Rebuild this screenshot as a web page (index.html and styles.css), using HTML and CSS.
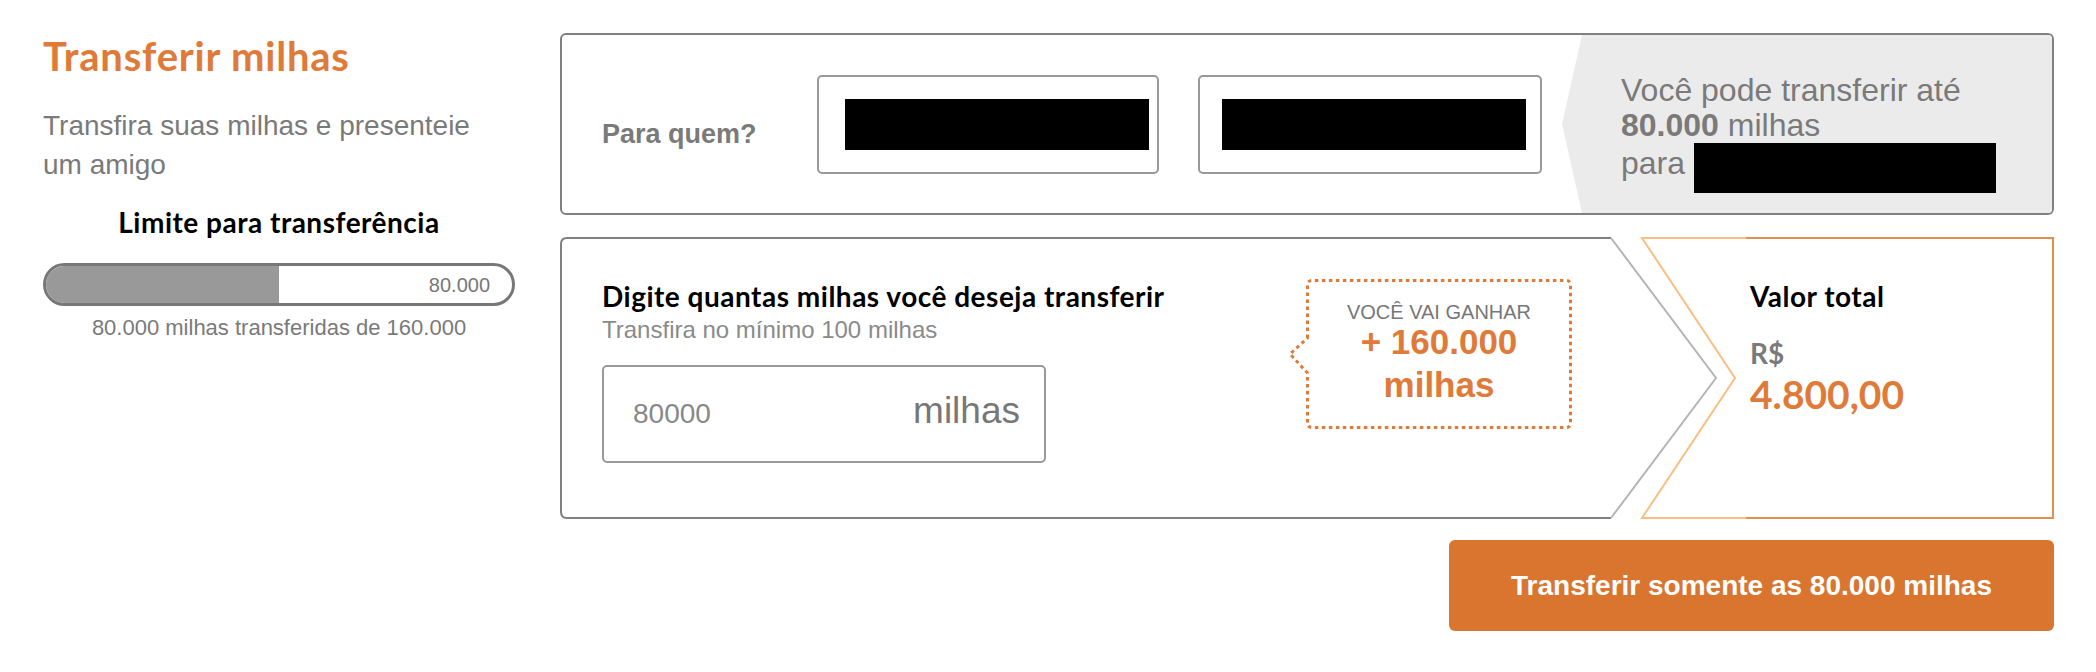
FILE: index.html
```html
<!DOCTYPE html>
<html>
    <head>
        <title>Transferir milhas</title>
        <meta charset="utf-8">
        <link rel="stylesheet" href="styles.css">
    </head>
    <body>
        <div id="page">

            <div id="intro">
                <div id="mainTitle">Transferir milhas</div>
                <p class="lead">Transfira suas milhas e presenteie um amigo</p>
                <div class="limitTitle">Limite para transferência</div>
                <div class="limitBar">
                    <div class="limitFill" style="width: 50%"></div>
                    <div class="limitValue">80.000</div>
                </div>
                <div class="limitCaption">80.000 milhas transferidas de 160.000</div>
            </div>

            <div id="transfer">
                <div class="recipientCard">
                    <div class="recipientLabel">Para quem?</div>
                    <div class="field"><div class="redacted"></div></div>
                    <div class="field fieldWide"><div class="redacted"></div></div>
                    <div class="allowance">
                        Você pode transferir até<br>
                        <b>80.000</b> milhas<br>
                        para <span class="redacted redactedInline"></span>
                    </div>
                </div>

                <div class="calcRow">
                    <svg class="calcFrame" width="1494" height="282" viewBox="0 0 1494 282">
                        <path d="M1051 1 H7 Q1 1 1 7 V275 Q1 281 7 281 H1051" fill="none" stroke="#808080" stroke-width="2"/>
                        <path d="M1051 1 L1156 141 L1051 281" fill="none" stroke="#b5b5b5" stroke-width="2"/>
                        <path d="M1082 1 H1493 V281 H1082" fill="none" stroke="#e48d4f" stroke-width="2"/>
                        <path d="M1186 1 H1082 L1175 141 L1082 281 H1186" fill="none" stroke="#f7bf82" stroke-width="2"/>
                    </svg>

                    <div class="amountEntry">
                        <div class="sectionTitle">Digite quantas milhas você deseja transferir</div>
                        <div class="hint">Transfira no mínimo 100 milhas</div>
                        <div class="amountInput">
                            <span class="amountValue">80000</span>
                            <span class="amountUnit">milhas</span>
                        </div>
                    </div>

                    <div class="bonus">
                        <svg class="bonusOutline" width="284" height="150" viewBox="0 0 284 150">
                            <path d="M19.5 59 V6 Q19.5 1.5 24 1.5 H278 Q282.5 1.5 282.5 6 V144 Q282.5 148.5 278 148.5 H24 Q19.5 148.5 19.5 144 V94 L2 75 Z" fill="none" stroke="#e07a38" stroke-width="3" stroke-dasharray="3.5 3.5"/>
                        </svg>
                        <div class="bonusLabel">VOCÊ VAI GANHAR</div>
                        <div class="bonusValue">+ 160.000<br>milhas</div>
                    </div>

                    <div class="totalBox">
                        <div class="sectionTitle">Valor total</div>
                        <div class="currency">R$</div>
                        <div class="totalValue">4.800,00</div>
                    </div>
                </div>

                <div class="actions">
                    <div class="button">Transferir somente as 80.000 milhas</div>
                </div>
            </div>

        </div>
    </body>
</html>
```

FILE: styles.css
```css
body {
    margin: 0px;
    font-family: "Liberation Sans", Arial, sans-serif;
    color: #7a7a7a;
    background-color: white;
}
#page {
    display: flex;
    gap: 45px;
    padding: 33px 42px 0 43px;
}
#intro {
    flex: 0 0 472px;
}
#mainTitle {
    font-family: Lato, sans-serif;
    font-weight: bold;
    font-size: 40px;
    line-height: 46px;
    letter-spacing: 0.8px;
    color: #e07a38;
}
.lead {
    font-size: 28px;
    line-height: 39px;
    margin: 27px 0 0 0;
    max-width: 450px;
}
.limitTitle {
    font-family: Lato, sans-serif;
    font-weight: bold;
    font-size: 28px;
    line-height: 32px;
    letter-spacing: 0.5px;
    color: black;
    text-align: center;
    margin-top: 22px;
}
.limitBar {
    display: flex;
    align-items: center;
    height: 43px;
    box-sizing: border-box;
    margin-top: 25px;
    border: 3px solid #777;
    border-radius: 22px;
    overflow: hidden;
}
.limitFill {
    align-self: stretch;
    background-color: #999;
}
.limitValue {
    margin-left: auto;
    padding: 2px 22px 0 0;
    font-size: 20px;
    color: #777;
}
.limitCaption {
    font-size: 22px;
    line-height: 26px;
    text-align: center;
    margin-top: 9px;
}
#transfer {
    flex: 0 0 1494px;
}
.recipientCard {
    display: flex;
    align-items: center;
    height: 182px;
    box-sizing: border-box;
    padding-left: 40px;
    border: 2px solid #808080;
    border-radius: 6px;
    overflow: hidden;
}
.recipientLabel {
    flex: 0 0 215px;
    font-size: 27px;
    font-weight: bold;
    margin-top: 20px;
}
.field {
    display: flex;
    align-items: center;
    width: 342px;
    height: 99px;
    box-sizing: border-box;
    padding-left: 26px;
    margin-right: 39px;
    border: 2px solid #999;
    border-radius: 5px;
}
.fieldWide {
    width: 344px;
    padding-left: 22px;
    margin-right: 20px;
}
.redacted {
    width: 304px;
    height: 51px;
    background-color: black;
}
.allowance {
    flex: 1;
    align-self: stretch;
    box-sizing: border-box;
    padding: 38px 0 0 59px;
    background-color: #ebebeb;
    font-size: 32px;
    line-height: 35px;
    clip-path: polygon(20px 0, 100% 0, 100% 100%, 20px 100%, 0 50%);
}
.redactedInline {
    display: inline-block;
    width: 302px;
    height: 50px;
    vertical-align: -19px;
}
.calcRow {
    position: relative;
    display: flex;
    align-items: flex-start;
    height: 282px;
    margin-top: 22px;
}
.calcFrame {
    position: absolute;
    left: 0;
    top: 0;
}
.amountEntry {
    flex: 0 0 746px;
    box-sizing: border-box;
    padding: 43px 0 0 42px;
}
.sectionTitle {
    font-family: Lato, sans-serif;
    font-weight: bold;
    font-size: 28px;
    line-height: 32px;
    letter-spacing: 0.5px;
    color: black;
}
.hint {
    font-size: 24px;
    line-height: 28px;
    color: #8a8a8a;
    margin-top: 4px;
}
.amountInput {
    display: flex;
    align-items: baseline;
    justify-content: space-between;
    width: 444px;
    height: 98px;
    box-sizing: border-box;
    margin-top: 21px;
    padding: 25px 24px 0 29px;
    border: 2px solid #999;
    border-radius: 5px;
}
.amountValue {
    font-size: 28px;
    color: #888;
}
.amountUnit {
    font-size: 37px;
    line-height: 37px;
    color: #777;
}
.bonus {
    position: relative;
    flex: 0 0 266px;
    height: 150px;
    box-sizing: border-box;
    margin-top: 42px;
    padding-top: 23px;
    text-align: center;
}
.bonusOutline {
    position: absolute;
    left: -18px;
    top: 0;
}
.bonusLabel {
    font-size: 20px;
    line-height: 20px;
    color: #777;
}
.bonusValue {
    font-size: 35px;
    font-weight: bold;
    line-height: 43px;
    color: #e07a38;
    margin-top: -2px;
}
.totalBox {
    flex: 0 0 304px;
    margin-left: auto;
    padding-top: 43px;
}
.currency {
    font-family: Lato, sans-serif;
    font-weight: bold;
    font-size: 28px;
    line-height: 34px;
    color: #7a7a7a;
    margin-top: 24px;
}
.totalValue {
    font-family: Lato, sans-serif;
    font-weight: bold;
    font-size: 39px;
    line-height: 44px;
    color: #e07a38;
    margin-top: 2px;
}
.actions {
    display: flex;
    justify-content: flex-end;
    margin-top: 21px;
}
.button {
    display: flex;
    align-items: center;
    justify-content: center;
    width: 605px;
    height: 91px;
    border-radius: 6px;
    background-color: #d9752f;
    color: white;
    font-size: 28px;
    font-weight: bold;
}
```
